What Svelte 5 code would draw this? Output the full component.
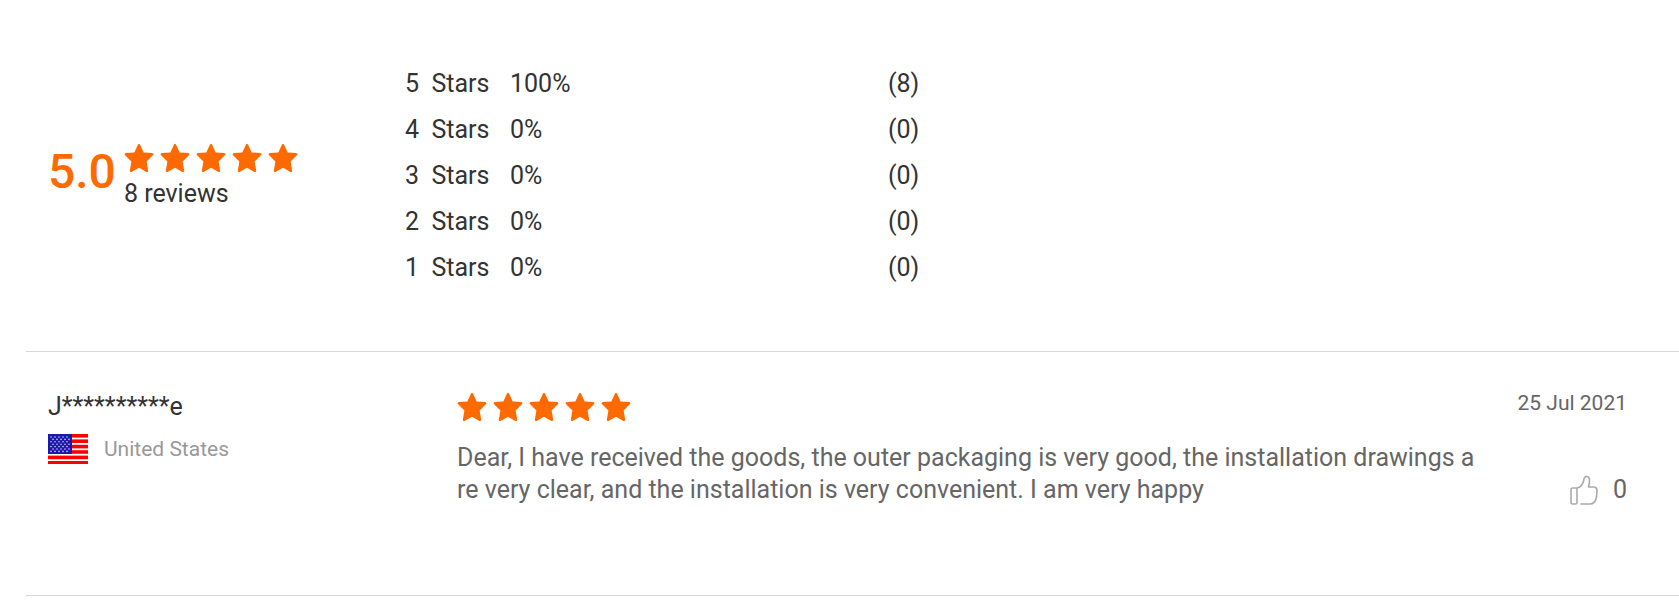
<script>
    // Rating breakdown, highest score first
    const ratings = [
        { score: 5, percent: 100, count: 8 },
        { score: 4, percent: 0, count: 0 },
        { score: 3, percent: 0, count: 0 },
        { score: 2, percent: 0, count: 0 },
        { score: 1, percent: 0, count: 0 },
    ];

    const reviews = [
        {
            name: 'J**********e',
            country: 'United States',
            date: '25 Jul 2021',
            stars: 5,
            text: 'Dear, I have received the goods, the outer packaging is very good, the installation drawings are very clear, and the installation is very convenient. I am very happy',
            likes: 0,
        },
    ];

    // Small white dots on the flag's canton
    const dots = [];
    for (let row = 0; row < 7; row++) {
        for (let col = 0; col < 5; col++) {
            dots.push({ x: 3 + col * 4 + (row % 2) * 2, y: 3 + row * 2.4 });
        }
    }
</script>

<style>
    :global(body) {
        margin: 0;
        background-color: #fff;
    }
    .reviews {
        margin-left: 26px;
        font-family: Roboto, "Liberation Sans", sans-serif;
        font-size: 25px;
        line-height: 32px;
        color: #333;
    }
    .summary {
        display: flex;
        align-items: center;
        padding: 61px 22px 60px;
    }
    .overall {
        display: flex;
        gap: 8px;
        width: 357px;
    }
    .score {
        font-size: 48px;
        font-weight: 500;
        line-height: 58px;
        color: #ff6a00;
    }
    .total {
        margin-top: 5px;
    }
    .stars {
        display: flex;
        gap: 6px;
    }
    .stars svg {
        display: block;
        width: 30px;
        height: 30px;
        fill: #ff6a00;
    }
    .breakdown {
        border-collapse: collapse;
    }
    .breakdown th, .breakdown td {
        height: 46px;
        padding: 0;
        font-weight: 400;
        text-align: left;
        white-space: pre;
    }
    .breakdown th {
        width: 105px;
    }
    .breakdown .percent {
        width: 378px;
    }
    .review {
        display: grid;
        grid-template-columns: 409px minmax(0, 1fr) 150px;
        min-height: 207px;
        padding: 36px 52px 0 22px;
        border-top: 1px solid #d8d8d8;
    }
    .review:last-child {
        border-bottom: 1px solid #d8d8d8;
    }
    .author {
        padding-top: 3px;
    }
    .country {
        display: flex;
        align-items: center;
        gap: 16px;
        margin-top: 10px;
        font-size: 21px;
        color: #999;
    }
    .flag {
        width: 40px;
        height: 30px;
    }
    .content {
        padding-top: 4px;
    }
    .text {
        margin: 20px 0 0;
        word-break: break-all;
        color: #666;
    }
    .side {
        display: flex;
        flex-direction: column;
        align-items: flex-end;
        gap: 56px;
        color: #666;
    }
    .date {
        font-size: 21px;
        line-height: 30px;
    }
    .like {
        display: flex;
        align-items: center;
        gap: 15px;
        padding: 0;
        border: none;
        background: none;
        font: inherit;
        color: inherit;
        cursor: pointer;
    }
    .like svg {
        width: 28px;
        height: 30px;
        fill: none;
        stroke: #aaa;
        stroke-width: 1.6;
        stroke-linecap: round;
        stroke-linejoin: round;
    }
</style>

{#snippet stars(count)}
    <div class="stars" role="img" aria-label="{count} stars">
        {#each { length: count } as _}
            <svg viewBox="0 0 30 30">
                <path d="M14 1.4Q15 0 16 1.4L19.7 9.4 28.2 10.1Q30.2 10.8 28.9 12.3L22.6 18.4 24.2 27.7Q24.1 29.6 22.4 28.9L15 24.8 7.6 28.9Q5.9 29.6 5.8 27.7L7.4 18.4 1.1 12.3Q-.2 10.8 1.8 10.1L10.3 9.4Z" />
            </svg>
        {/each}
    </div>
{/snippet}

<div class="reviews">
    <div class="summary">
        <div class="overall">
            <span class="score">5.0</span>
            <div>
                {@render stars(5)}
                <div class="total">8 reviews</div>
            </div>
        </div>
        <table class="breakdown">
            <tbody>
                {#each ratings as rating}
                    <tr>
                        <th scope="row">{rating.score}{'  '}Stars</th>
                        <td class="percent">{rating.percent}%</td>
                        <td>({rating.count})</td>
                    </tr>
                {/each}
            </tbody>
        </table>
    </div>

    {#each reviews as review}
        <div class="review">
            <div class="author">
                <div>{review.name}</div>
                <div class="country">
                    <svg class="flag" viewBox="0 0 40 30" aria-hidden="true">
                        <rect width="40" height="30" fill="#fff" />
                        {#each [0, 5.4, 10.8, 16.2, 21.6, 27] as y}
                            <rect {y} width="40" height="3.6" fill="#f00" />
                        {/each}
                        <rect width="24" height="20" fill="#1a1aa6" />
                        {#each dots as dot}
                            <circle cx={dot.x} cy={dot.y} r="0.8" fill="#c8c8f0" />
                        {/each}
                    </svg>
                    <span>{review.country}</span>
                </div>
            </div>
            <div class="content">
                {@render stars(review.stars)}
                <p class="text">{review.text}</p>
            </div>
            <div class="side">
                <span class="date">{review.date}</span>
                <button class="like" aria-label="Like, {review.likes}">
                    <svg viewBox="0 0 28 30">
                        <path d="M7 13H2.5Q1 13 1 14.5V27.5Q1 29 2.5 29H5.5Q7 29 7 27.5V13Q12 12 13.6 6Q14 1.5 16.500 1.5Q19.5 1.5 19.5 5Q19.5 8.5 18.5 12H24Q27.2 12.5 27 15.5L26.5 22Q25 29 20 29H11" />
                    </svg>
                    <span>{review.likes}</span>
                </button>
            </div>
        </div>
    {/each}
</div>
